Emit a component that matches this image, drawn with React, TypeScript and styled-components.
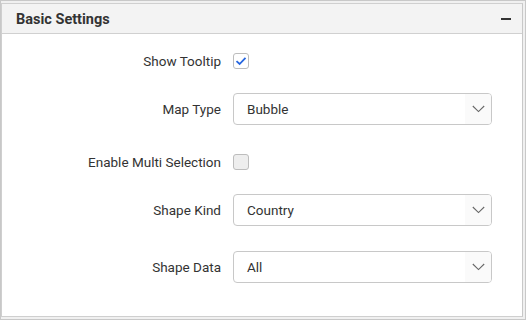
import styled, { createGlobalStyle } from "styled-components";

const GlobalStyle = createGlobalStyle`
  html, body {
    margin: 0;
    padding: 0;
    background: #ffffff;
  }
  body {
    font-family: Roboto, "Liberation Sans", sans-serif;
  }
`;

const Frame = styled.div`
  box-sizing: border-box;
  width: 526px;
  height: 320px;
  border: 1px solid #c8c8c8;
  padding: 2px 2px 2px 0px;
  background: #f0f0f0;
`;

const Panel = styled.div`
  box-sizing: border-box;
  height: 100%;
  border: 1px solid #cfcfcf;
  border-right-color: #c8c8c8;
  background: #ffffff;
`;

const Header = styled.div`
  height: 29px;
  display: flex;
  align-items: center;
  justify-content: space-between;
  padding: 0 11px 0 14px;
  background: #f3f3f3;
  border-bottom: 1px solid #d0d0d0;
`;

const Title = styled.div`
  font-size: 14.5px;
  font-weight: 700;
  color: #333333;
  padding-top: 1px;
`;

const Collapse = styled.span`
  display: block;
  width: 10px;
  height: 2px;
  background: #333333;
  margin-top: 1px;
`;

const Body = styled.div`
  padding-top: 11px;
`;

const Row = styled.div<{ $top: number }>`
  display: grid;
  grid-template-columns: 219px 259px;
  column-gap: 12px;
  align-items: center;
  height: 32px;
  margin-top: ${(p) => p.$top}px;
`;

const Label = styled.label`
  text-align: right;
  font-size: 13.5px;
  color: #333333;
`;

const Check = styled.span<{ $checked?: boolean }>`
  box-sizing: border-box;
  width: 16px;
  height: 16px;
  border: 1px solid #bdbdbd;
  border-radius: 3px;
  background: ${(p) => (p.$checked ? "#ffffff" : "#eeeeee")};
  display: flex;
  align-items: center;
  justify-content: center;
`;

const Select = styled.div`
  box-sizing: border-box;
  height: 32px;
  border: 1px solid #c8c8c8;
  border-radius: 4px;
  display: flex;
  align-items: center;
  overflow: hidden;
`;

const Value = styled.span`
  flex: 1;
  padding-left: 13px;
  font-size: 13.5px;
  color: #333333;
`;

const Arrow = styled.span`
  width: 26px;
  height: 100%;
  background: #fafafa;
  display: flex;
  align-items: center;
  justify-content: center;
`;

function Chevron() {
  return (
    <svg width="13" height="8" viewBox="0 0 13 8">
      <path d="M0.8 1 L6.5 6.6 L12.2 1" fill="none" stroke="#666" strokeWidth="1.1" />
    </svg>
  );
}

function Tick() {
  return (
    <svg width="12" height="10" viewBox="0 0 12 10">
      <path d="M1.5 5.2 L4.6 8 L10.5 1.8" fill="none" stroke="#2767e0" strokeWidth="1.8" />
    </svg>
  );
}

function Dropdown({ value }: { value: string }) {
  return (
    <Select>
      <Value>{value}</Value>
      <Arrow>
        <Chevron />
      </Arrow>
    </Select>
  );
}

export default function App() {
  return (
    <>
      <GlobalStyle />
      <Frame>
        <Panel>
          <Header>
            <Title>Basic Settings</Title>
            <Collapse />
          </Header>
          <Body>
            <Row $top={0}>
              <Label>Show Tooltip</Label>
              <Check $checked>
                <Tick />
              </Check>
            </Row>
            <Row $top={16}>
              <Label>Map Type</Label>
              <Dropdown value="Bubble" />
            </Row>
            <Row $top={21}>
              <Label>Enable Multi Selection</Label>
              <Check />
            </Row>
            <Row $top={16}>
              <Label>Shape Kind</Label>
              <Dropdown value="Country" />
            </Row>
            <Row $top={25}>
              <Label>Shape Data</Label>
              <Dropdown value="All" />
            </Row>
          </Body>
        </Panel>
      </Frame>
    </>
  );
}
